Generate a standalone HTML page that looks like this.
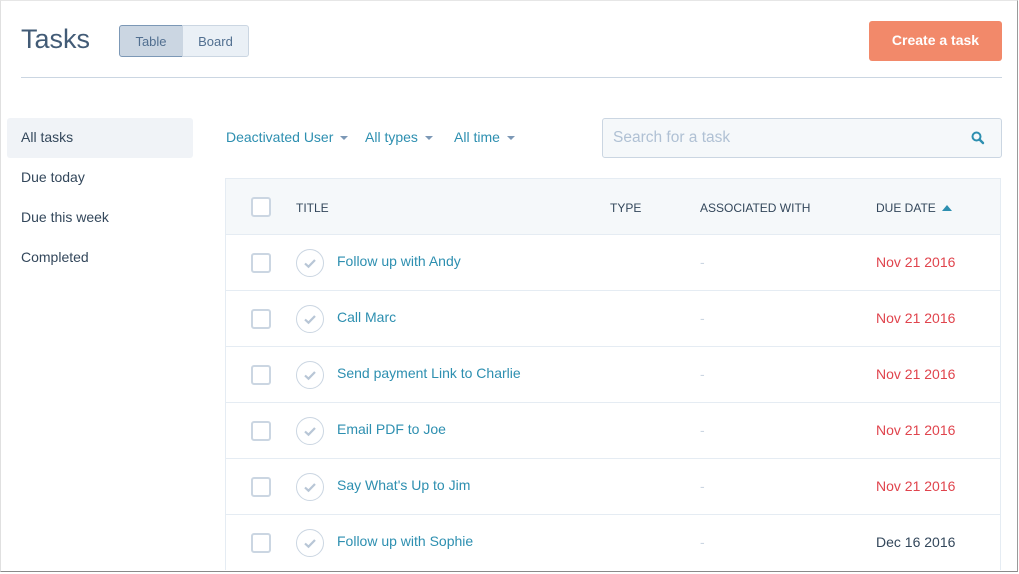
<!DOCTYPE html>
<html><head><style>
*{margin:0;padding:0;box-sizing:border-box}
body{width:1019px;height:574px;background:#fff;font-family:"Liberation Sans",sans-serif;position:relative;overflow:hidden;color:#33475b}
.win{position:absolute;left:0;top:0;width:1018px;height:572px;border-right:1px solid #9a9a9a;border-bottom:1px solid #8a8a8a;border-left:1px solid #e0e0e0;border-top:1px solid #e6e6e6}
.a{position:absolute}
h1{position:absolute;left:21px;top:24px;font-size:27px;font-weight:normal;color:#425b76}
.tog{position:absolute;top:25px;height:32px;font-size:13px;line-height:31px;text-align:center;color:#516f90;border:1px solid #cbd6e2}
.nav{position:absolute;left:21px;font-size:14px;color:#33475b}
.flt{position:absolute;top:129px;font-size:14px;color:#2d8fb0}
.caret{display:inline-block;width:0;height:0;border-left:4px solid transparent;border-right:4px solid transparent;border-top:4px solid #7c98b6;margin-left:7px;vertical-align:middle}
.th{position:absolute;top:201px;font-size:12px;color:#33475b}
.row{position:absolute;left:225px;width:776px;height:56px;border-top:1px solid #e5ecf3;border-left:1px solid #e5ecf3;border-right:1px solid #e5ecf3}
.cb{position:absolute;left:25px;top:18px;width:20px;height:20px;border:2px solid #cbd6e2;border-radius:3px;background:#fff}
.chk{position:absolute;left:70px;top:14px;width:28px;height:28px;border:1px solid #cbd6e2;border-radius:50%}
.t{position:absolute;left:111px;top:18px;font-size:14px;color:#2d8fb0}
.d{position:absolute;left:474px;top:19px;font-size:14px;color:#cbd6e2}
.dt{position:absolute;left:650px;top:19px;font-size:14px;color:#e0444d}
</style></head><body>
<div class="win"></div>
<h1>Tasks</h1>
<div class="tog" style="left:119px;width:64px;background:#cbd6e2;border-color:#7c98b6;border-radius:3px 0 0 3px">Table</div>
<div class="tog" style="left:182px;width:67px;background:#eaf0f6;border-radius:0 3px 3px 0">Board</div>
<div class="a" style="left:869px;top:21px;width:133px;height:40px;background:#f2896a;border-radius:3px;color:#fff;font-size:14px;font-weight:bold;text-align:center;line-height:39px">Create a task</div>
<div class="a" style="left:21px;top:77px;width:981px;height:1px;background:#cbd6e2"></div>
<div class="a" style="left:7px;top:118px;width:186px;height:40px;background:#f0f3f7;border-radius:3px"></div>
<div class="nav" style="top:129px">All tasks</div>
<div class="nav" style="top:169px">Due today</div>
<div class="nav" style="top:209px">Due this week</div>
<div class="nav" style="top:249px">Completed</div>
<div class="flt" style="left:226px">Deactivated User<span class="caret"></span></div>
<div class="flt" style="left:365px">All types<span class="caret"></span></div>
<div class="flt" style="left:454px">All time<span class="caret"></span></div>
<div class="a" style="left:602px;top:118px;width:400px;height:40px;border:1px solid #cbd6e2;border-radius:3px;background:#f5f8fa"></div>
<div class="a" style="left:613px;top:129px;font-size:15.5px;color:#b0c1d4">Search for a task</div>
<svg class="a" style="left:971px;top:131px" width="14" height="14" viewBox="0 0 14 14"><circle cx="5.5" cy="5.5" r="4" fill="none" stroke="#2d8fb0" stroke-width="2"/><path d="M8.5 8.5L12 12" stroke="#2d8fb0" stroke-width="2.4" stroke-linecap="round"/></svg>
<div class="row" style="top:178px;background:#f5f8fa"><div class="cb"></div></div>
<div class="th" style="left:296px">TITLE</div>
<div class="th" style="left:610px">TYPE</div>
<div class="th" style="left:700px">ASSOCIATED WITH</div>
<div class="th" style="left:876px">DUE DATE <span style="display:inline-block;width:0;height:0;border-left:5px solid transparent;border-right:5px solid transparent;border-bottom:6px solid #2d8fb0;vertical-align:1px;margin-left:3px"></span></div>
<div class="row" style="top:234px"><div class="cb"></div><div class="chk"><svg width="26" height="26"><path d="M8 13.5l3.5 3.2L18 10" fill="none" stroke="#b8c6d6" stroke-width="2.2"/></svg></div><div class="t">Follow up with Andy</div><div class="d">-</div><div class="dt">Nov 21 2016</div></div>
<div class="row" style="top:290px"><div class="cb"></div><div class="chk"><svg width="26" height="26"><path d="M8 13.5l3.5 3.2L18 10" fill="none" stroke="#b8c6d6" stroke-width="2.2"/></svg></div><div class="t">Call Marc</div><div class="d">-</div><div class="dt">Nov 21 2016</div></div>
<div class="row" style="top:346px"><div class="cb"></div><div class="chk"><svg width="26" height="26"><path d="M8 13.5l3.5 3.2L18 10" fill="none" stroke="#b8c6d6" stroke-width="2.2"/></svg></div><div class="t">Send payment Link to Charlie</div><div class="d">-</div><div class="dt">Nov 21 2016</div></div>
<div class="row" style="top:402px"><div class="cb"></div><div class="chk"><svg width="26" height="26"><path d="M8 13.5l3.5 3.2L18 10" fill="none" stroke="#b8c6d6" stroke-width="2.2"/></svg></div><div class="t">Email PDF to Joe</div><div class="d">-</div><div class="dt">Nov 21 2016</div></div>
<div class="row" style="top:458px"><div class="cb"></div><div class="chk"><svg width="26" height="26"><path d="M8 13.5l3.5 3.2L18 10" fill="none" stroke="#b8c6d6" stroke-width="2.2"/></svg></div><div class="t">Say What's Up to Jim</div><div class="d">-</div><div class="dt">Nov 21 2016</div></div>
<div class="row" style="top:514px"><div class="cb"></div><div class="chk"><svg width="26" height="26"><path d="M8 13.5l3.5 3.2L18 10" fill="none" stroke="#b8c6d6" stroke-width="2.2"/></svg></div><div class="t">Follow up with Sophie</div><div class="d">-</div><div class="dt" style="color:#33475b">Dec 16 2016</div></div>
</body></html>
